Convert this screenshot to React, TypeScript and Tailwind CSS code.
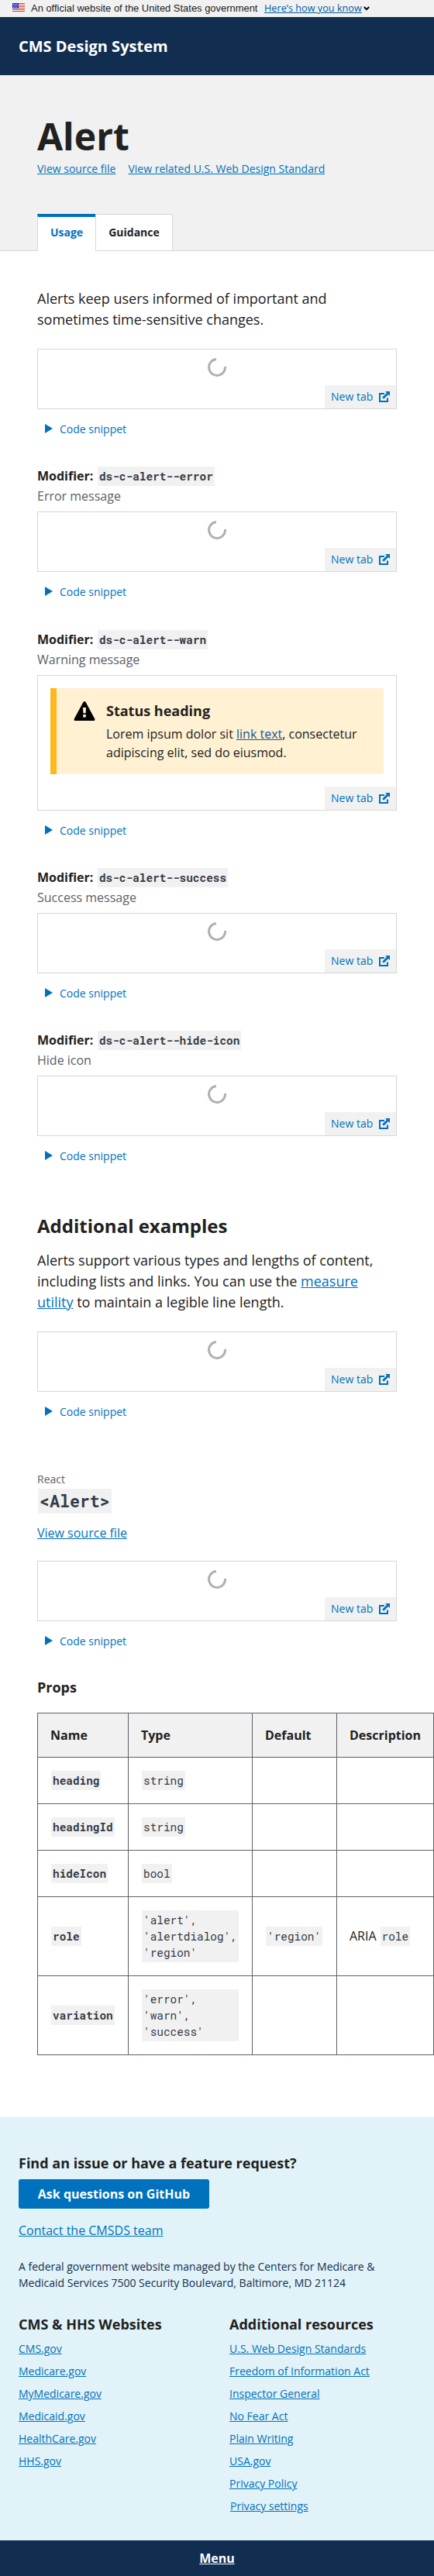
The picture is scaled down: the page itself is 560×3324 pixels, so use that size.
import React from "react";

const link = "text-[#0071bc] underline";

function Code({ children, bold = false }: { children: React.ReactNode; bold?: boolean }) {
  return (
    <code
      className={`ml-px inline-block h-[25px] whitespace-nowrap bg-[#f1f1f1] px-[2px] font-['Roboto_Mono','Liberation_Mono',monospace] text-[14.4px] leading-[25px] text-[#323a45] ${bold ? "font-bold" : "font-normal"}`}
    >
      {children}
    </code>
  );
}

function Flag() {
  return (
    <svg className="mt-1 shrink-0" width="16" height="11" viewBox="0 0 16 11" shapeRendering="crispEdges">
      <rect width="16" height="11" fill="#fff" />
      {[0, 2, 4, 6, 8, 10].map((y) => (
        <rect key={y} y={y} width="16" height="1" fill="#db3e1f" />
      ))}
      <rect width="8" height="7" fill="#1e33b1" />
      {[1, 3, 5].map((y) =>
        [1, 3, 5].map((x) => <rect key={`${x}-${y}`} x={y === 3 ? x + 1 : x} y={y} width="1" height="1" fill="#fff" />)
      )}
    </svg>
  );
}

function Spinner() {
  return (
    <svg width="24" height="24" viewBox="0 0 24 24" fill="none">
      <path d="M11 1.5A10.5 10.5 0 1 0 22.5 11" stroke="#aeb0b5" strokeWidth="3" />
    </svg>
  );
}

function NewTab() {
  return (
    <a className="flex h-[30px] w-[92px] items-center justify-between bg-[#f1f1f1] px-2 text-[#0071bc]">
      <span className="mb-px whitespace-nowrap text-sm leading-[19px]">New tab</span>
      <svg width="14" height="14" viewBox="0 0 14 14" fill="none">
        <path d="M7 3H1V13H11V8.5" stroke="#0071bc" strokeWidth="2" />
        <path d="M8 0H14V6L12 4L6.2 9.8L4.2 7.8L10 2Z" fill="#0071bc" />
      </svg>
    </a>
  );
}

function Preview({ children }: { children?: React.ReactNode }) {
  return (
    <div>
      <div className="flex flex-col border border-[#d6d7d9]">
        {children ?? (
          <div className="flex h-[46px] justify-center pt-[11px]">
            <Spinner />
          </div>
        )}
        <div className="flex justify-end">
          <NewTab />
        </div>
      </div>
      <div className="flex h-[50px] items-center gap-[9px] pl-[10px] text-[#0071bc]">
        <svg width="10" height="12" viewBox="0 0 10 12">
          <path d="M0 0L10 6L0 12Z" fill="#0071bc" />
        </svg>
        <span className="pt-px text-sm leading-[19px]">Code snippet</span>
      </div>
    </div>
  );
}

function Modifier({ name, text, className, children }: { name: string; text: string; className: string; children?: React.ReactNode }) {
  return (
    <section className={className}>
      <div className="flex h-[25px] items-start gap-[4.6px] text-base font-bold leading-6">
        <span>Modifier:</span>
        <Code bold>{name}</Code>
      </div>
      <div className="mb-2 mt-px text-base leading-6 text-[#5b616b]">{text}</div>
      <Preview>{children}</Preview>
    </section>
  );
}

function WarnAlert() {
  return (
    <div className="m-4 flex h-[111px] border-l-8 border-[#fdb81e] bg-[#fff1d2]">
      <svg className="ml-[22px] mt-[17px] shrink-0" width="28" height="25" viewBox="0 0 28 25">
        <path d="M12.4 1Q14 -1 15.6 1L27.2 22.5Q28 25 26 25H2Q0 25 0.8 22.5Z" fill="#000" />
        <path d="M12 8H16L15.6 15.2H12.4Z M12.2 16.9H15.8V20.6H12.2Z" fill="#fff1d2" />
      </svg>
      <div className="ml-[14px] pt-4">
        <h3 className="text-lg font-bold leading-[26px]">Status heading</h3>
        <p className="mt-[5px] whitespace-nowrap text-base leading-6">
          Lorem ipsum dolor sit <a className="text-[#205493] underline">link text</a>, consectetur
          <br />
          adipiscing elit, sed do eiusmod.
        </p>
      </div>
    </div>
  );
}

const rows: { name: string; type: string[]; def?: string; desc?: boolean; h: string }[] = [
  { name: "heading", type: ["string"], h: "h-[60px]" },
  { name: "headingId", type: ["string"], h: "h-[60px]" },
  { name: "hideIcon", type: ["bool"], h: "h-[60px]" },
  { name: "role", type: ["'alert',", "'alertdialog',", "'region'"], def: "'region'", desc: true, h: "h-[102px]" },
  { name: "variation", type: ["'error',", "'warn',", "'success'"], h: "h-[102px]" },
];
const cols = "grid grid-cols-[117px_160px_109px_125px]";
const cell = "flex items-center border-b border-r border-[#5b616b] pl-4";

function PropsTable() {
  return (
    <div className="w-[512px] border-l border-t border-[#5b616b]">
      <div className={`${cols} h-[57px] bg-[#f1f1f1] text-base font-bold`}>
        {["Name", "Type", "Default", "Description"].map((t) => (
          <div key={t} className={cell}>
            {t}
          </div>
        ))}
      </div>
      {rows.map((r) => (
        <div key={r.name} className={`${cols} ${r.h}`}>
          <div className={cell}>
            <Code bold>{r.name}</Code>
          </div>
          <div className={cell}>
            {r.type.length === 1 ? (
              <Code>{r.type[0]}</Code>
            ) : (
              <code className="ml-px flex h-[67px] w-[125px] flex-col bg-[#f1f1f1] px-[2px] pt-[2px] font-['Roboto_Mono','Liberation_Mono',monospace] text-[14.4px] leading-[21px] text-[#323a45]">
                {r.type.map((t) => (
                  <span key={t}>{t}</span>
                ))}
              </code>
            )}
          </div>
          <div className={cell}>{r.def && <Code>{r.def}</Code>}</div>
          <div className={cell}>
            {r.desc && (
              <div className="flex h-[25px] items-start gap-1 text-base leading-6">
                <span>ARIA</span>
                <Code>role</Code>
              </div>
            )}
          </div>
        </div>
      ))}
    </div>
  );
}

function LinkList({ title, items }: { title: string; items: string[] }) {
  return (
    <div>
      <h3 className="text-lg font-bold leading-[27px]">{title}</h3>
      <ul className="mt-[7px]">
        {items.map((t) => (
          <li key={t} className={`h-[29px] text-sm leading-[21px] ${t === "Privacy settings" ? "pl-px" : ""}`}>
            <a className={link}>{t}</a>
          </li>
        ))}
      </ul>
    </div>
  );
}

export default function App() {
  return (
    <div className="h-[3324px] w-[560px] overflow-hidden bg-white font-['Open_Sans',sans-serif] text-[#212121]">
      <div className="flex h-[22px] items-start bg-[#f1f1f1] pl-4">
        <Flag />
        <span className="ml-2 w-[293px] whitespace-nowrap font-['Liberation_Sans',sans-serif] text-[12.94px] leading-[21px] text-[#1b1b1b]">
          An official website of the United States government
        </span>
        <a className="ml-2 whitespace-nowrap text-[12.7px] leading-5 text-[#005ea2] underline">Here’s how you know</a>
        <svg className="ml-[2px] mt-2" width="8" height="6" viewBox="0 0 8 6" fill="none">
          <path d="M0.8 1L4 4.2L7.2 1" stroke="#000" strokeWidth="2" />
        </svg>
      </div>
      <header className="flex h-[75px] items-center bg-[#112e51] pl-6 text-xl font-bold text-white">CMS Design System</header>
      <div className="flex h-[227px] flex-col border-b border-[#d6d7d9] bg-[#f1f1f1] px-12 pt-12">
        <h1 className="mb-px text-5xl font-bold leading-[61px]">Alert</h1>
        <div className="flex gap-4 text-sm leading-[21px]">
          <a className={link}>View source file</a>
          <a className={link}>View related U.S. Web Design Standard</a>
        </div>
        <div className="mt-12 flex text-sm font-bold leading-[21px]">
          <div className="flex h-12 w-[75px] justify-center border-l border-t-4 border-l-[#d6d7d9] border-t-[#0071bc] bg-white pt-[9px] text-[#0071bc]">
            Usage
          </div>
          <div className="flex h-[47px] w-[100px] justify-center border border-b-0 border-[#d6d7d9] bg-white pt-3">Guidance</div>
        </div>
      </div>

      <main className="h-[2408px] px-12 pt-12">
        <p className="text-lg leading-[27px]">
          Alerts keep users informed of important and
          <br />
          sometimes time-sensitive changes.
        </p>
        <div className="mt-6">
          <Preview />
        </div>
        <Modifier className="mt-6" name="ds-c-alert--error" text="Error message" />
        <Modifier className="mt-[25px]" name="ds-c-alert--warn" text="Warning message">
          <WarnAlert />
        </Modifier>
        <Modifier className="mt-6" name="ds-c-alert--success" text="Success message" />
        <Modifier className="mt-6" name="ds-c-alert--hide-icon" text="Hide icon" />

        <h2 className="mt-[49px] text-2xl font-bold leading-[33px]">Additional examples</h2>
        <p className="mt-[15px] text-lg leading-[27px]">
          Alerts support various types and lengths of content,
          <br />
          including lists and links. You can use the <a className={link}>measure</a>
          <br />
          <a className={link}>utility</a> to maintain a legible line length.
        </p>
        <div className="mt-6">
          <Preview />
        </div>

        <div className="mt-[52px] text-sm leading-[21px] text-[#5b616b]">React</div>
        <code className="ml-px mt-[2px] block h-8 w-[95px] bg-[#f1f1f1] px-[2px] font-['Roboto_Mono','Liberation_Mono',monospace] text-[21.6px] font-bold leading-[32px] text-[#323a45]">
          {"<Alert>"}
        </code>
        <a className={`mt-[13px] block text-base leading-6 ${link}`}>View source file</a>
        <div className="mt-6">
          <Preview />
        </div>
        <h3 className="mb-[19px] mt-[22px] text-lg font-bold leading-[27px]">Props</h3>
        <PropsTable />
      </main>

      <footer className="h-[546px] bg-[#e1f3f8] px-6 pt-[46px]">
        <h3 className="text-lg font-bold leading-[27px]">Find an issue or have a feature request?</h3>
        <button className="mt-[7px] block h-[38px] w-[246px] rounded-[3px] bg-[#0071bc] text-base font-bold text-white">
          Ask questions on GitHub
        </button>
        <a className={`mt-4 block text-base leading-6 ${link}`}>Contact the CMSDS team</a>
        <p className="mt-6 text-sm leading-[21px] text-[#112e51]">
          A federal government website managed by the Centers for Medicare &amp;
          <br />
          Medicaid Services 7500 Security Boulevard, Baltimore, MD 21124
        </p>
        <div className="mt-[30px] grid grid-cols-[272px_1fr]">
          <LinkList title="CMS & HHS Websites" items={["CMS.gov", "Medicare.gov", "MyMedicare.gov", "Medicaid.gov", "HealthCare.gov", "HHS.gov"]} />
          <LinkList
            title="Additional resources"
            items={["U.S. Web Design Standards", "Freedom of Information Act", "Inspector General", "No Fear Act", "Plain Writing", "USA.gov", "Privacy Policy", "Privacy settings"]}
          />
        </div>
      </footer>
      <div className="flex h-[46px] items-center justify-center bg-[#112e51] text-base font-bold text-white underline">Menu</div>
    </div>
  );
}
